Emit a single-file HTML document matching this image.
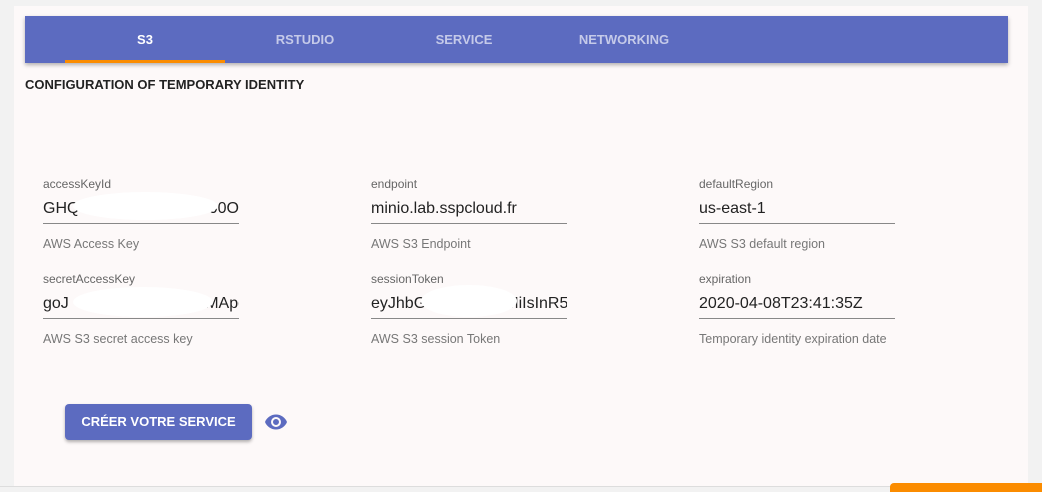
<!DOCTYPE html>
<html><head><style>
body{margin:0;width:1042px;height:492px;background:#f2f2f2;font-family:"Liberation Sans",sans-serif;position:relative;overflow:hidden}
.panel{position:absolute;left:14px;top:6px;width:1014px;height:480px;background:#fdf9f9}
.bar{position:absolute;left:25px;top:16px;width:983px;height:47px;background:#5c6bc0;box-shadow:0 2px 4px rgba(0,0,0,.3)}
.tab{position:absolute;top:0;width:160px;height:47px;line-height:47px;text-align:center;font-size:13px;font-weight:bold;color:#c5cae9}
.ind{position:absolute;left:40px;top:44px;width:160px;height:3px;background:#fb8c00}
.title{position:absolute;left:25px;top:77px;font-size:13px;font-weight:bold;color:#222}
.f{position:absolute;width:196px}
.l{font-size:12px;color:#666;position:absolute;top:0}
.v{font-size:16px;color:#222;position:absolute;top:23px;white-space:nowrap;overflow:hidden;width:196px;height:20px}
.u{position:absolute;top:46px;width:196px;height:1px;background:#888}
.h{font-size:12.5px;color:#777;position:absolute;top:60px;white-space:nowrap}
.blob{position:absolute;background:#fff;border-radius:50%}
.r{position:absolute;right:0;top:0}
.btn{position:absolute;left:65px;top:404px;width:187px;height:36px;background:#5c6bc0;border-radius:4px;box-shadow:0 2px 3px rgba(0,0,0,.3);color:#fff;font-size:13px;font-weight:bold;text-align:center;line-height:36px}
</style></head><body>
<div class="panel"></div>
<div class="bar">
<div class="tab" style="left:40px;color:#fff">S3</div>
<div class="tab" style="left:200px">RSTUDIO</div>
<div class="tab" style="left:359px">SERVICE</div>
<div class="tab" style="left:519px">NETWORKING</div>
<div class="ind"></div>
</div>
<div class="title">CONFIGURATION OF TEMPORARY IDENTITY</div>

<div class="f" style="left:43px;top:177px"><div class="l">accessKeyId</div><div class="v">GHQ<span class="r">000O</span></div><div class="blob" style="left:30px;top:15px;width:145px;height:28px"></div><div class="u"></div><div class="h">AWS Access Key</div></div>
<div class="f" style="left:371px;top:177px"><div class="l">endpoint</div><div class="v">minio.lab.sspcloud.fr</div><div class="u"></div><div class="h">AWS S3 Endpoint</div></div>
<div class="f" style="left:699px;top:177px"><div class="l">defaultRegion</div><div class="v">us-east-1</div><div class="u"></div><div class="h">AWS S3 default region</div></div>

<div class="f" style="left:43px;top:272px"><div class="l">secretAccessKey</div><div class="v">goJ<span class="r" style="right:-8px">MApq</span></div><div class="blob" style="left:30px;top:15px;width:140px;height:30px"></div><div class="u"></div><div class="h">AWS S3 secret access key</div></div>
<div class="f" style="left:371px;top:272px"><div class="l">sessionToken</div><div class="v">eyJhbGciOiJIUzUxMiIsInR5cC</div><div class="blob" style="left:50px;top:13px;width:96px;height:32px"></div><div class="u"></div><div class="h">AWS S3 session Token</div></div>
<div class="f" style="left:699px;top:272px"><div class="l">expiration</div><div class="v">2020-04-08T23:41:35Z</div><div class="u"></div><div class="h">Temporary identity expiration date</div></div>

<div class="btn">CRÉER VOTRE SERVICE</div>
<svg style="position:absolute;left:264px;top:410px" width="24" height="24" viewBox="0 0 24 24"><path fill="#5c6bc0" d="M12 4.5C7 4.5 2.7 7.6 1 12c1.7 4.4 6 7.5 11 7.5s9.3-3.1 11-7.5c-1.7-4.4-6-7.5-11-7.5zM12 17a5 5 0 1 1 0-10 5 5 0 0 1 0 10zm0-8a3 3 0 1 0 0 6 3 3 0 0 0 0-6z"/></svg>
<div style="position:absolute;left:0;top:486px;width:1042px;height:1px;background:#ddd"></div>
<div style="position:absolute;left:890px;top:483px;width:152px;height:9px;background:#fb8c00;border-radius:4px 0 0 0"></div>
</body></html>
